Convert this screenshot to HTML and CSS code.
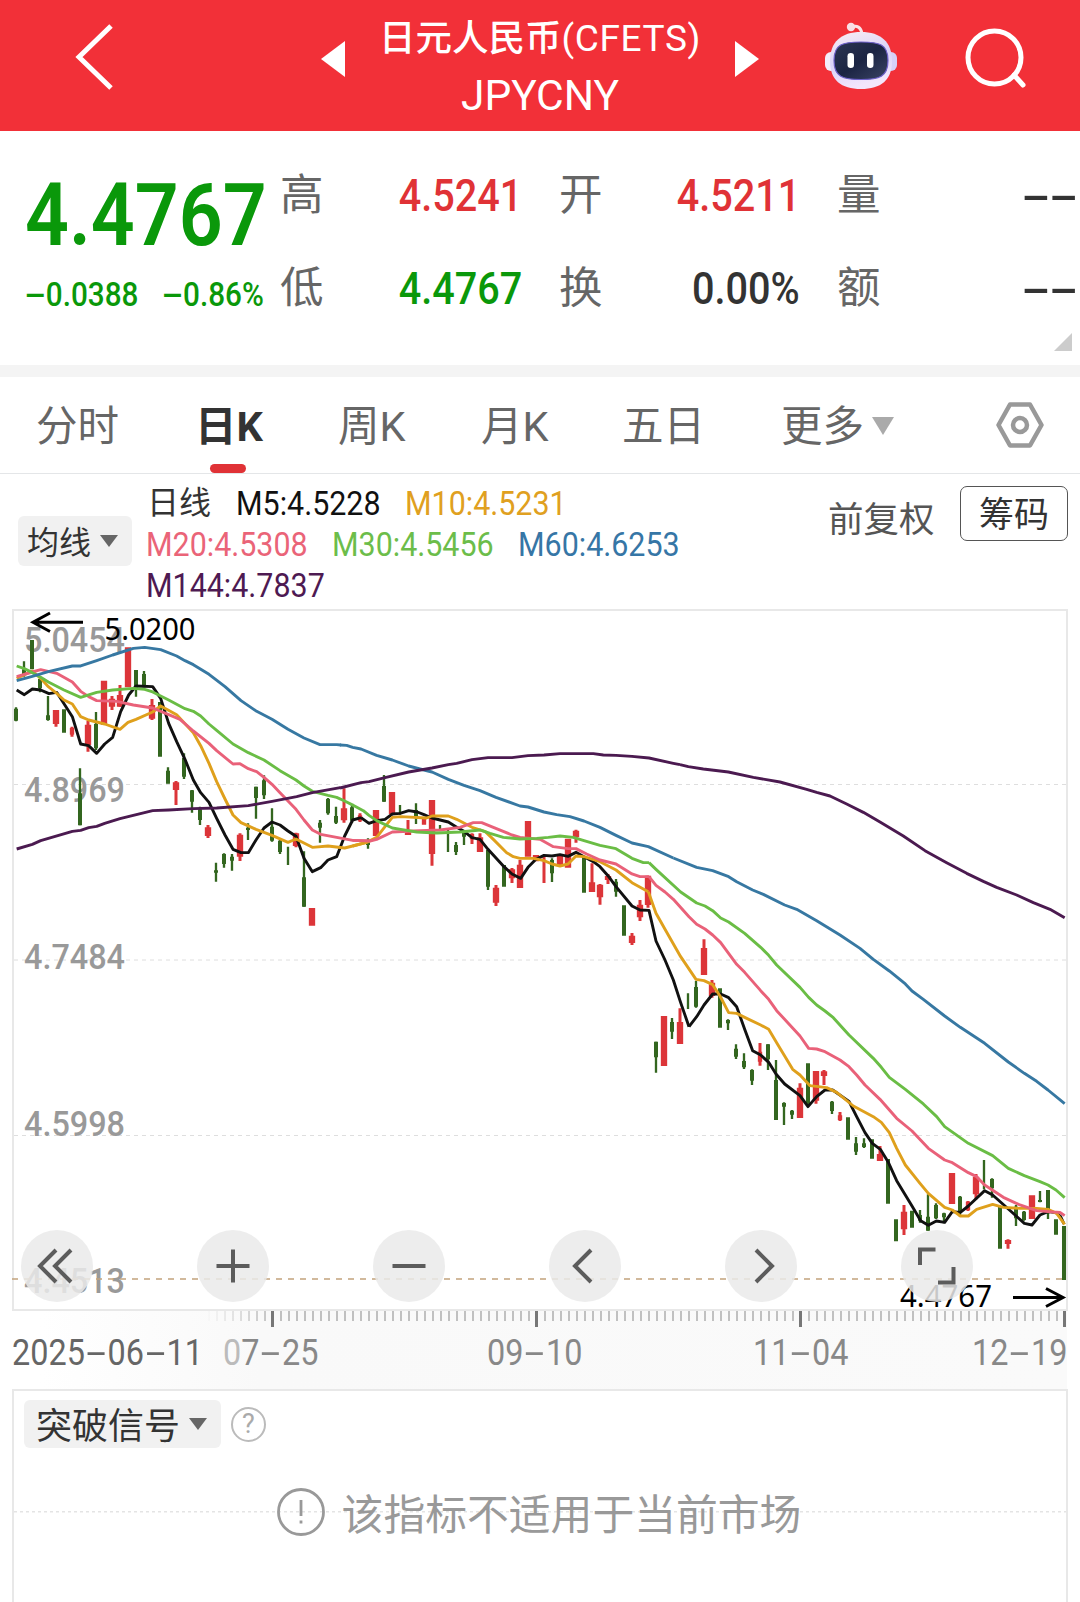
FILE: index.html
```html
<!DOCTYPE html>
<html lang="zh-CN">
<head>
<meta charset="utf-8">
<title>JPYCNY</title>
<link rel="stylesheet" href="styles.css">
</head>
<body>
<header class="topbar">
  <svg class="back" viewBox="0 0 44 72"><path d="M38 5 L6 36 L38 67"/></svg>
  <svg class="step" viewBox="0 0 24 36"><path d="M24 0V36L0 18Z"/></svg>
  <div class="title">
    <div class="name">日元人民币<span class="latin">(CFETS)</span></div>
    <div class="code">JPYCNY</div>
  </div>
  <svg class="step" viewBox="0 0 24 36"><path d="M0 0V36L24 18Z"/></svg>
  <svg class="robot" viewBox="0 0 74 68">
    <defs>
      <linearGradient id="shell" x1="0" y1="0" x2="0.3" y2="1"><stop offset="0" stop-color="#fbeef4"/><stop offset=".55" stop-color="#d9d2f8"/><stop offset="1" stop-color="#f3e6fb"/></linearGradient>
      <linearGradient id="visor" x1="0" y1="0" x2="1" y2="1"><stop offset="0" stop-color="#2c3552"/><stop offset=".5" stop-color="#1b2443"/><stop offset="1" stop-color="#3a4464"/></linearGradient>
    </defs>
    <path d="M27 5C33 3 37 5 38 12" fill="none" stroke="#fbe3e8" stroke-width="3"/>
    <circle cx="27" cy="5" r="4.2" fill="#f9dfe6"/>
    <rect x="1" y="30" width="12" height="19" rx="6" fill="#f3eefb"/>
    <rect x="61" y="30" width="12" height="19" rx="6" fill="#d6d0f8"/>
    <path d="M37 10C57 10 68 20 68 39C68 58 57 67 37 67C17 67 6 58 6 39C6 20 17 10 37 10Z" fill="url(#shell)"/>
    <path d="M37 20C55 20 64 22 64 38.500C64 55 55 57.500 37 57.500C19 57.500 10 55 10 38.500C10 22 19 20 37 20Z" fill="url(#visor)" stroke="#6d60c8" stroke-width="1.200"/>
    <rect x="23.500" y="31" width="6.500" height="15" rx="3.200" fill="#fff"/>
    <rect x="43" y="31" width="6.500" height="15" rx="3.200" fill="#fff"/>
  </svg>
  <svg class="search" viewBox="0 0 64 64"><circle cx="30.500" cy="30.500" r="26.500"/><path d="M50 48L59 58"/></svg>
</header>

<section class="quote">
  <div class="last">
    <div class="price"><span class="num">4.4767</span></div>
    <div class="change">
      <span class="num"><i class="dash">-</i>0.0388</span>
      <span class="num right"><i class="dash">-</i>0.86%</span>
    </div>
  </div>
  <dl class="stats">
    <dt>高</dt><dd class="up"><span class="num right">4.5241</span></dd>
    <dt>开</dt><dd class="up"><span class="num right">4.5211</span></dd>
    <dt>量</dt><dd><span class="num right"><i class="dash">-</i><i class="dash">-</i></span></dd>
    <dt>低</dt><dd class="down"><span class="num right">4.4767</span></dd>
    <dt>换</dt><dd><span class="num right">0.00%</span></dd>
    <dt>额</dt><dd><span class="num right"><i class="dash">-</i><i class="dash">-</i></span></dd>
  </dl>
  <svg class="corner" viewBox="0 0 18 18"><path d="M18 0V18H0Z"/></svg>
</section>

<nav class="tabs">
  <span class="tab">分时</span>
  <span class="tab active">日K</span>
  <span class="tab">周K</span>
  <span class="tab">月K</span>
  <span class="tab">五日</span>
  <span class="tab more">更多<svg viewBox="0 0 22 18"><path d="M0 0H22L11 18Z"/></svg></span>
  <svg class="gear" viewBox="0 0 48 46"><path d="M14 2.500H34L45.500 23L34 43.500H14L2.500 23Z"/><circle cx="24" cy="23" r="7"/></svg>
</nav>

<section class="legend">
  <div class="select ma"><span>均线</span><svg viewBox="0 0 18 12"><path d="M0 0H18L9 12Z"/></svg></div>
  <div class="averages">
    <div class="line"><span class="period">日线</span><span class="num m5">M5:4.5228</span><span class="num m10">M10:4.5231</span></div>
    <div class="line"><span class="num m20">M20:4.5308</span><span class="num m30">M30:4.5456</span><span class="num m60">M60:4.6253</span></div>
    <div class="line"><span class="num m144">M144:4.7837</span></div>
  </div>
  <span class="adjust">前复权</span>
  <span class="chips">筹码</span>
</section>

<section class="chart">
<svg class="plot" viewBox="0 609 1080 703">
  <rect class="frame" x="13" y="610" width="1054" height="700"/>
  <path class="grid" d="M14 784.500H1066M14 960H1066M14 1135.500H1066"/>
  <g class="scale">
    <text x="24" y="652" textLength="101" lengthAdjust="spacingAndGlyphs">5.0454</text>
    <text x="24" y="802" textLength="101" lengthAdjust="spacingAndGlyphs">4.8969</text>
    <text x="24" y="968.500" textLength="101" lengthAdjust="spacingAndGlyphs">4.7484</text>
    <text x="24" y="1136" textLength="101" lengthAdjust="spacingAndGlyphs">4.5998</text>
    <text x="24" y="1293" textLength="101" lengthAdjust="spacingAndGlyphs">4.4513</text>
  </g>
  <path class="lastline" d="M12 1279H1066"/>
  <g class="mark">
    <text x="104.500" y="640" textLength="91" lengthAdjust="spacingAndGlyphs">5.0200</text>
    <path d="M83 622.300H33M50 613L33 622.300L50 631.500"/>
    <text x="900" y="1306.500" textLength="92" lengthAdjust="spacingAndGlyphs">4.4767</text>
    <path d="M1013 1297.500H1063M1046 1288.500L1063 1297.500L1046 1306.500"/>
  </g>

  <g transform="translate(0 600) scale(.33333)">
    <path class="dn wick" d="M48 322V364M72 184V230M120 235V277M144 288V362M240 505V676M288 336V450M408 265V290M432 213V262M504 502V550M552 460V537M576 570V638M600 620V675M648 788V845M672 760V803M696 762V812M744 670V720M768 560V656M792 526V597M816 625V725M840 720V762M864 740V795M912 754V920M960 660V728M984 594V644M1008 620V672M1056 615V668"/>
    <path class="dn body" d="M48 326V362M72 208V222M96 120V208M120 237V265M144 346V360M192 328V398M240 580V676M288 372V445M408 210V265M432 222V262M480 306V470M504 512V551M552 474V530M576 571V605M600 628V660M648 811V818M672 762V792M696 770V782M744 683V690M768 560V594M792 541V586M816 680V722M840 722V756M912 832V920M960 668V683M984 597V640M1008 648V668M1056 622V662"/>
    <path class="up wick" d="M168 330V380M216 380V410M264 362V455M336 288V330M360 255V320M456 297V360M528 543V615M624 675V714M720 700V783M888 698V742M1032 565V668"/>
    <path class="up body" d="M168 330V372M264 374V435M312 242V374M336 296V320M360 285V320M384 142V262M456 315V356M528 547V570M624 682V708M720 704V770M888 700V738M936 924V977M1032 625V661"/>
    <path class="up thin" d="M216 384V404"/>
  </g>
  <g transform="translate(340 730) scale(.33333)">
    <path class="dn wick" d="M84 325V356M132 135V215M180 225V254M228 220V282M300 285V302M324 300V366M348 336V375M372 300V345M444 360V480M636 385V456M828 447V500"/>
    <path class="dn body" d="M84 334V345M132 168V215M228 240V262M348 345V366M372 306V320M444 360V470M492 405V470M636 390V430M732 378V488M828 455V485M852 526V617"/>
    <path class="up wick" d="M60 250V276M204 270V315M276 210V407M396 310V342M420 310V366M468 465V528M516 414V459M540 390V474M612 380V459M708 299V338M756 400V486M780 462V524M804 432V462M876 609V645M900 510V573M924 437V533"/>
    <path class="up thin" d="M60 256V272M252 262V284M396 312V328"/>
    <path class="up body" d="M108 240V318M156 186V252M204 307V315M276 210V372M420 322V366M468 473V518M516 418V445M540 404V474M564 273V380M588 375V394M660 378V405M684 326V413M708 302V322M756 457V486M780 464V502M804 438V450M876 617V639M900 524V562M924 437V525"/>
  </g>
  <g transform="translate(640 860) scale(.33333)">
    <path class="dn wick" d="M48 545V638M96 474V537M144 400V447M168 363V443M264 478V510M288 553V597M312 580V627M336 628V675M384 553V630M408 600V780M432 727V795M456 750V777M576 723V762M648 831V885M672 835V864M840 1050V1088M864 1003V1112M888 1030V1077M912 1058V1090M960 1008V1070M1032 900V988M1056 955V1013M1128 1035V1098M1152 1053V1082M1200 993V1027M1224 990V1077"/>
    <path class="dn body" d="M48 545V592M96 486V515M168 381V440M240 385V503M264 480V490M288 566V590M312 603V622M336 630V662M384 553V598M408 660V780M432 729V740M456 752V764M504 610V735M576 725V753M624 772V839M648 850V875M672 850V861M696 838V896M744 897V1031M768 1078V1144M816 1052V1103M840 1065V1082M864 1070V1112M888 1035V1075M912 1060V1072M960 1010V1055M1056 957V985M1080 1040V1166M1128 1040V1075M1152 1055V1080M1200 1020V1026M1224 990V1060M1248 1078V1124M1272 1098V1260"/>
    <path class="up wick" d="M120 445V552M192 238V345M216 360V413M360 549V617M480 670V774M528 633V731M552 630V675M600 756V783M720 858V903M792 1035V1125M984 1023V1053M1008 942V1018M1104 1138V1166"/>
    <path class="up thin" d="M360 575V605M600 766V780M984 1025V1050"/>
    <path class="up body" d="M72 468V618M120 486V552M192 264V345M216 368V408M480 683V774M528 633V722M552 634V648M720 882V903M792 1055V1108M936 939V1032M1008 950V1003M1104 1140V1152M1176 1006V1077"/>
  </g>

  <g transform="translate(0 600) scale(.33333)">
    <polyline class="c-m5" points="50,270 73,284 97,267 122,270 147,281 170,277 217,350 242,432 266,437 290,460 314,432 338,412 362,335 386,285 408,258 458,260 482,295 506,370 530,425 555,478 580,540 602,578 627,607 650,655 675,705 699,748 723,758 745,758 768,720 792,684 816,666 840,675 864,693 888,709 912,775 937,815 962,803 984,780 1010,770 1034,708 1058,660 1083,653"/>
    <polyline class="c-m10" points="50,235 97,213 122,235 145,260 170,280 192,300 217,312 242,350 266,360 314,372 360,388 384,367 408,358 458,336 482,318 530,344 580,398 602,437 627,490 650,545 675,597 699,645 723,668 768,688 816,706 864,727 888,717 937,742 984,738 1034,744 1058,738 1100,727"/>
    <polyline class="c-m20" points="50,230 97,216 122,209 170,220 217,246 242,274 266,290 290,302 350,304 400,315 458,324 506,344 540,358 580,393 627,430 650,452 699,492 720,491 745,506 770,515 792,532 816,553 840,578 888,628 912,660 937,690 962,703 1010,712 1058,721 1110,723"/>
    <polyline class="c-m30" points="50,198 73,206 97,218 122,232 145,246 192,270 242,292 290,277 338,270 400,265 434,268 458,276 506,300 555,326 580,334 602,348 627,372 650,391 699,432 745,458 792,480 840,512 888,540 912,558 937,574 984,586 1010,592 1034,603 1060,616"/>
    <polyline class="c-m60" points="50,242 97,229 145,215 217,198 242,198 290,182 338,165 400,145 434,142 482,149 530,168 555,182 580,194 627,223 675,260 723,302 770,334 816,358 864,388 912,414 960,434 1010,434 1023,435"/>
    <polyline class="c-m144" points="50,747 97,733 122,722 217,694 242,691 266,683 290,679 314,670 360,656 458,632 506,630 580,626 650,624 745,617 816,604 890,590 937,578 1021,563"/>
  </g>
  <g transform="translate(340 730) scale(.33333)">
    <polyline class="c-m5" points="63,263 87,280 110,272 135,268 157,252 180,250 206,242 232,246 252,254 276,264 325,276 350,292 372,304 396,323 420,328 444,358 492,410 516,432 542,445 564,412 588,388 612,376 636,378 660,374 684,379 708,367 732,380 760,395 780,410 804,437 828,470 876,528 900,540 927,541 948,633 975,690 1000,750 1022,818 1047,890"/>
    <polyline class="c-m10" points="38,348 80,337 110,322 135,290 157,262 182,260 260,264 276,258 325,258 350,268 396,292 436,305 460,328 500,368 520,380 540,385 580,385 612,392 636,402 660,408 684,402 708,378 732,380 780,395 828,420 876,458 925,485"/>
    <polyline class="c-m20" points="38,331 90,333 110,328 157,306 220,303 300,300 360,292 400,278 425,278 460,292 516,315 540,322 600,328 640,350 684,356 708,356 740,372 780,390 828,402 876,432 900,440 927,440"/>
    <polyline class="c-m30" points="38,225 70,242 87,256 110,272 157,294 182,298 230,306 290,309 360,306 420,300 450,310 490,322 540,327 590,325 625,322 660,318 700,322 732,332 780,346 828,356 876,385 910,398 927,398"/>
    <polyline class="c-m60" points="0,45 20,46 38,52 63,57 110,76 157,90 206,108 240,117 276,126 325,148 372,166 420,182 468,202 540,228 564,231 612,246 650,254 690,260 732,273 780,292 828,316 876,339 925,350 1000,384"/>
    <polyline class="c-m144" points="0,174 63,158 87,155 135,143 206,126 276,114 325,104 350,100 396,89 444,83 516,83 564,77 612,75 660,71 760,71 790,75 828,76 876,79 927,84 1000,100 1020,104"/>
  </g>
  <g transform="translate(640 860) scale(.33333)">
    <polyline class="c-m5" points="147,500 170,470 192,435 218,402 242,402 266,413 290,440 314,508 338,572 362,585 386,607 408,642 434,672 480,707 504,740 530,710 555,690 578,690 627,724 650,770 675,818 697,850 721,868 744,905 770,962 816,1038 842,1082 865,1096 889,1083 914,1087 937,1055 961,1057 985,1038 1034,992 1058,1005 1105,1047 1153,1090 1176,1095 1200,1065 1224,1055 1248,1058 1262,1070 1272,1092"/>
    <polyline class="c-m10" points="25,95 48,160 75,208 122,290 168,358 192,362 218,374 240,408 266,458 290,460 314,472 362,495 386,508 410,548 458,628 480,645 510,677 560,683 590,697 640,738 700,770 724,787 748,818 770,865 796,915 840,970 865,1000 914,1042 937,1050 961,1068 985,1068 1010,1048 1058,1033 1090,1042 1140,1045 1190,1045 1224,1048 1250,1060 1274,1093"/>
    <polyline class="c-m20" points="27,50 48,76 75,96 100,118 147,170 170,193 195,207 218,225 242,248 290,313 314,337 362,392 386,418 410,452 480,528 506,565 530,567 555,575 600,600 627,620 650,645 675,675 720,718 770,775 816,813 865,865 914,900 937,908 985,938 1010,950 1034,975 1090,1012 1140,1035 1190,1052 1240,1056 1260,1057 1274,1067"/>
    <polyline class="c-m30" points="27,8 48,28 122,96 170,129 195,138 218,152 242,174 266,186 314,220 362,262 386,286 410,315 480,382 506,412 530,435 555,453 580,473 627,525 700,595 724,622 748,652 796,688 850,732 890,770 914,800 985,850 1058,887 1105,925 1153,947 1200,965 1224,975 1248,990 1274,1013"/>
    <polyline class="c-m60" points="100,-6 170,22 218,32 266,50 290,65 338,90 370,103 434,135 470,148 530,182 600,225 660,265 700,298 748,333 796,372 816,393 850,418 914,468 961,502 1034,550 1105,606 1153,640 1190,664 1224,690 1274,731"/>
    <polyline class="c-m144" points="120,-286 145,-280 190,-273 265,-264 340,-248 420,-234 500,-212 530,-203 570,-192 620,-168 670,-143 720,-114 790,-72 855,-28 920,8 980,40 1030,64 1070,82 1130,105 1180,128 1230,148 1274,173"/>
  </g>
</svg>
<div class="controls">
  <span class="btn"><svg viewBox="0 0 72 72"><path d="M35 20L19 36L35 52M50 20L34 36L50 52"/></svg></span>
  <span class="btn"><svg viewBox="0 0 72 72"><path d="M36 19.500V52.500M19.500 36H52.500"/></svg></span>
  <span class="btn"><svg viewBox="0 0 72 72"><path d="M19.500 36H52.500"/></svg></span>
  <span class="btn"><svg viewBox="0 0 72 72"><path d="M42 20L26 36L42 52"/></svg></span>
  <span class="btn"><svg viewBox="0 0 72 72"><path d="M31 20L47 36L31 52"/></svg></span>
  <span class="btn"><svg viewBox="0 0 72 72"><path d="M19 35V19.500H34.500M37 52.500H52.500V37"/></svg></span>
</div>
</section>

<section class="axis">
  <svg class="ruler" viewBox="0 0 1080 17">
    <defs><linearGradient id="fade" gradientUnits="userSpaceOnUse" x1="205" y1="0" x2="275" y2="0"><stop offset="0" stop-color="#888" stop-opacity="0"/><stop offset="1" stop-color="#888"/></linearGradient></defs>
    <path d="M208.500 5H1064" stroke="url(#fade)" stroke-width="10" stroke-dasharray="1 7"/>
    <path d="M272.500 0V16M536.500 0V16M800.500 0V16M1064.500 0V16" stroke="#777" stroke-width="3"/>
  </svg>
  <div class="dates">
    <span class="num start">2025<i class="dash">-</i>06<i class="dash">-</i>11</span>
    <span class="num first"><span class="faded">0</span>7<i class="dash">-</i>25</span>
    <span class="num">09<i class="dash">-</i>10</span>
    <span class="num third">11<i class="dash">-</i>04</span>
    <span class="num end">12<i class="dash">-</i>19</span>
  </div>
</section>

<section class="signal">
  <div class="signal-head">
    <div class="select"><span>突破信号</span><svg viewBox="0 0 18 12"><path d="M0 0H18L9 12Z"/></svg></div>
    <span class="help">?</span>
  </div>
  <div class="notice"><svg viewBox="0 0 48 48"><circle cx="24" cy="24" r="22.500"/><path d="M24 12V28M24 32.500V35.500"/></svg><span>该指标不适用于当前市场</span></div>
</section>
</body>
</html>
```
FILE: styles.css
```css
* { box-sizing: border-box; }
body { margin: 0; width: 1080px; height: 1602px; overflow: hidden; background: #fff; color: #333; font-family: Roboto, "Noto Sans CJK SC", sans-serif; }
svg { display: block; flex: none; }
i { font-style: normal; }

.num { display: inline-block; white-space: nowrap; transform: scaleX(.9); transform-origin: 0 50%; }
.num.right { transform-origin: 100% 50%; }
.dash { display: inline-block; width: .7em; text-align: center; transform: scaleX(2.2); }

.topbar { display: flex; align-items: flex-start; height: 131px; background: #f23038; color: #fff; }
.back { width: 44px; height: 72px; margin: 21px 0 0 73px; fill: none; stroke: #fff; stroke-width: 5; }
.step { width: 24px; height: 36px; margin-top: 41px; fill: #fff; }
.back + .step { margin-left: 204px; }
.title { width: 390px; text-align: center; font-weight: 500; }
.name { height: 57px; padding-top: 11px; line-height: 56px; font-size: 36.5px; white-space: nowrap; font-weight: 500; }
.name .latin { font-size: 37px; font-weight: 400; letter-spacing: .6px; }
.code { line-height: 56px; padding-top: 11px; font-size: 42.5px; font-weight: 400; }
.robot { width: 74px; height: 68px; margin: 22px 0 0 65px; }
.search { width: 64px; height: 64px; margin: 27px 0 0 66px; fill: none; stroke: #fff; stroke-width: 5; stroke-linecap: round; }

.quote { position: relative; display: flex; height: 246px; border-bottom: 12px solid #f4f4f4; }
.last { width: 280px; padding-left: 25px; color: #0a980a; }
.price { height: 130px; line-height: 100px; padding-top: 34px; font-size: 87px; font-weight: 600; }
.price .num { transform: scaleX(.885); }
.change { display: flex; justify-content: space-between; width: 239px; padding-top: 14px; line-height: 40px; font-size: 33px; font-weight: 500; }
.stats { display: grid; grid-template-columns: 43px 199px 37px 43px 198px 37px 43px 198px; grid-auto-rows: 93px; margin: 18px 0 0; font-size: 44px; line-height: 93px; }
.stats dt { font-size: 43.5px; color: #666; white-space: nowrap; }
.stats dt:nth-of-type(3n+1) { grid-column: 1; }
.stats dd:nth-of-type(3n+1) { grid-column: 2; }
.stats dt:nth-of-type(3n+2) { grid-column: 4; }
.stats dd:nth-of-type(3n+2) { grid-column: 5; }
.stats dt:nth-of-type(3n) { grid-column: 7; }
.stats dd:nth-of-type(3n) { grid-column: 8; }
.stats dd { margin: 0; padding-top: 1px; text-align: right; font-weight: 500; }
.stats .up { color: #e03236; }
.stats .down { color: #0a980a; }
.corner { position: absolute; right: 8px; bottom: 14px; width: 18px; height: 18px; fill: #ccc; }

.tabs { display: flex; align-items: center; height: 97px; border-bottom: 1.5px solid #e4e6e8; padding-left: 36px; font-size: 41.5px; color: #666; }
.tab { position: relative; width: 143px; padding-top: 2px; line-height: 93px; white-space: nowrap; }
.tab:first-child { width: 159px; }
.tab:nth-child(5) { width: 159px; }
.tab:nth-child(4) { width: 141px; }
.tab.active { font-weight: 700; color: #333; }
.tab.active::after { content: ""; position: absolute; left: 15px; bottom: 0; width: 36px; height: 9px; border-radius: 5px; background: #e03236; }
.tab.more { display: flex; align-items: center; gap: 8px; width: 215px; }
.more svg { width: 22px; height: 18px; fill: #aaa; }
.gear { width: 48px; height: 46px; fill: none; stroke: #999; stroke-width: 4.5; stroke-linejoin: round; }

.legend { display: flex; height: 135px; padding-left: 18px; }
.select { display: flex; align-items: center; gap: 9px; padding-left: 9px; border-radius: 6px; background: #f1f1f1; color: #333; white-space: nowrap; }
.select span { position: relative; top: -1px; }
.select svg { width: 18px; height: 12px; fill: #666; }
.ma { width: 114px; height: 50px; margin-top: 42px; font-size: 32px; }
.averages { width: 683px; padding: 9px 0 0 14px; font-size: 33px; }
.line { display: flex; height: 41px; line-height: 41px; }
.line .num { width: 186px; transform: scaleX(.922); }
.line .period { width: 90px; font-size: 32px; padding-left: 1px; }
.line .m5 { width: 169px; }
.m5 { color: #111; } .m10 { color: #e0a020; } .m20 { color: #ea6478; } .m30 { color: #6cbd4a; } .m60 { color: #3676a6; } .m144 { color: #4e1a52; }
.adjust { width: 145px; padding-left: 13px; margin-top: 21px; line-height: 50px; font-size: 35.5px; color: #555; }
.chips { width: 108px; height: 55px; margin-top: 12px; border: 1.5px solid #555; border-radius: 7px; text-align: center; line-height: 57px; font-size: 35px; }

.chart { position: relative; height: 702px; }
.plot { width: 1080px; height: 703px; }
.frame { fill: none; stroke: #e8e8e8; stroke-width: 2; }
.grid { fill: none; stroke: #dedede; stroke-width: 1; stroke-dasharray: 4 4; }
.lastline { fill: none; stroke: #c2a27c; stroke-width: 1.6; stroke-dasharray: 6 6; }
.scale { font-size: 35.5px; font-weight: 500; fill: #999; }
.mark { font-family: "Noto Sans", sans-serif; font-size: 30.5px; fill: #000; }
.mark path { fill: none; stroke: #000; stroke-width: 3; }
.up.wick, .up.body, .up.thin { fill: none; stroke: #dc3539; }
.dn { fill: none; stroke: #33661f; }
.wick { stroke-width: 7; }
.up.wick { stroke-width: 9; }
.dn.body { stroke-width: 12; }
.up.body { stroke-width: 19; }
.up.thin { stroke-width: 13; }
polyline { fill: none; stroke-width: 8.7; stroke-linejoin: round; }
.c-m5 { stroke: #111; } .c-m10 { stroke: #dfa01c; } .c-m20 { stroke: #e96179; } .c-m30 { stroke: #6abd45; } .c-m60 { stroke: #3778a2; } .c-m144 { stroke: #4b1a50; }
.controls { position: absolute; left: 21px; right: 107px; bottom: 9px; display: flex; justify-content: space-between; }
.btn { width: 72px; height: 72px; border-radius: 50%; background: rgba(234, 234, 234, .85); }
.btn svg { width: 72px; height: 72px; fill: none; stroke: #5c5c5c; stroke-width: 4; }

.axis { height: 78px; background: linear-gradient(90deg, #fff 40px, #f9f9f9 260px, #fafafa 1067px, #fff 1067px); }
.ruler { width: 1080px; height: 17px; }
.dates { display: flex; padding: 3px 0 0 12px; line-height: 44px; font-size: 36px; color: #888; }
.dates .num { flex: none; width: 266px; }
.dates .start { width: 211px; color: #666; }
.dates .first { width: 264px; }
.dates .faded { color: #bbb; }
.dates .third { width: 219px; }
.dates .end { width: 106px; }

.signal { height: 213px; margin: 0 12px; border: 2px solid #e8e8e8; border-bottom: 0; }
.signal-head { display: flex; align-items: center; gap: 10px; padding: 9px 0 0 10px; }
.signal .select { width: 197px; height: 48px; padding-left: 12px; font-size: 36px; gap: 9px; }
.help { width: 35px; height: 35px; border: 2.5px solid #bbb; border-radius: 50%; text-align: center; line-height: 31px; font-size: 27px; color: #aaa; }
.notice { display: flex; align-items: center; justify-content: center; gap: 17px; height: 60px; margin-top: 34px; padding-right: 2px; font-size: 41.8px; color: #999; background: repeating-linear-gradient(90deg, #e4e4e4 0 3px, transparent 3px 6px) 0 50% / 100% 1.5px no-repeat; }
.notice svg { width: 48px; height: 48px; fill: none; stroke: #999; stroke-width: 2.8; }
```
